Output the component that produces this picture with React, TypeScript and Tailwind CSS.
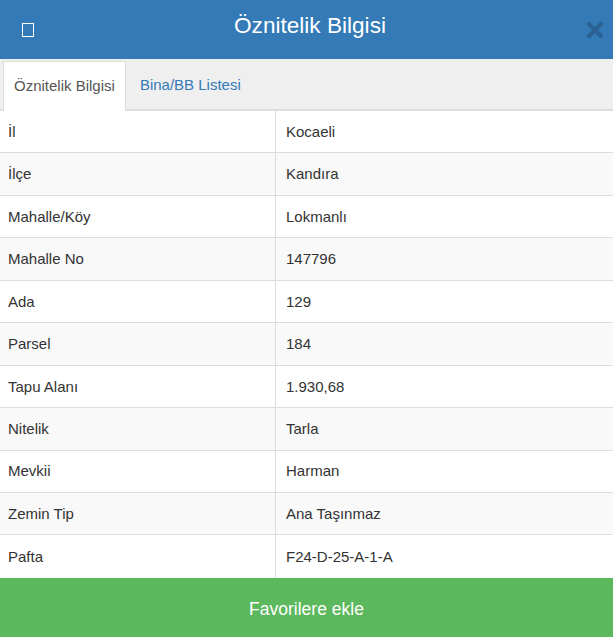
import { useState } from "react";

const rows: [string, string][] = [
  ["İl", "Kocaeli"],
  ["İlçe", "Kandıra"],
  ["Mahalle/Köy", "Lokmanlı"],
  ["Mahalle No", "147796"],
  ["Ada", "129"],
  ["Parsel", "184"],
  ["Tapu Alanı", "1.930,68"],
  ["Nitelik", "Tarla"],
  ["Mevkii", "Harman"],
  ["Zemin Tip", "Ana Taşınmaz"],
  ["Pafta", "F24-D-25-A-1-A"],
];

export default function App() {
  const [tab, setTab] = useState(0);

  return (
    <div className="w-[613px] h-[637px] flex flex-col bg-white text-[15px] text-[#333] font-['Liberation_Sans',Arial,sans-serif]">
      {/* Header */}
      <div className="h-[59px] shrink-0 bg-[#337ab7] flex items-center px-[22px] relative">
        <span className="w-[12px] h-[14px] border border-white mt-[1px]" />
        <h1 className="flex-1 text-center text-white text-[22.6px] leading-none pb-[6px]">Öznitelik Bilgisi</h1>
        <button className="w-[18px] h-[18px] flex items-center justify-center mr-[-13px] mt-[1px]">
          <svg viewBox="0 0 18 18" width="18" height="18">
            <path d="M3 3 L15 15 M15 3 L3 15" stroke="#2a6192" strokeWidth="4.2" strokeLinecap="round" />
          </svg>
        </button>
      </div>

      {/* Tabs */}
      <div className="h-[52px] shrink-0 bg-[#efefef] border-b-2 border-[#ddd] flex items-end pl-[3px]">
        {["Öznitelik Bilgisi", "Bina/BB Listesi"].map((label, i) => (
          <button
            key={label}
            onClick={() => setTab(i)}
            className={
              i === tab
                ? "h-[50px] mb-[-2px] px-[10px] bg-white border border-b-0 border-[#ddd] text-[#555] flex items-center"
                : "h-[48px] px-[14px] text-[#337ab7] flex items-center"
            }
          >
            {label}
          </button>
        ))}
      </div>

      {/* Attribute table */}
      <div className="flex-1 flex flex-col">
        {rows.map(([label, value], i) => (
          <div
            key={label}
            className={`h-[42.45px] grid grid-cols-[275px_1fr] ${i % 2 === 1 ? "bg-[#f9f9f9]" : "bg-white"} ${
              i < rows.length - 1 ? "border-b border-[#ddd]" : ""
            }`}
          >
            <div className="flex items-center pl-[8px] pt-[1px]">{label}</div>
            <div className="flex items-center pl-[10px] pt-[1px] border-l border-[#ddd]">{value}</div>
          </div>
        ))}
      </div>

      {/* Footer */}
      <button className="h-[59px] shrink-0 bg-[#5cb85c] text-white text-[17.5px] pt-[3px] flex items-center justify-center">
        Favorilere ekle
      </button>
    </div>
  );
}
